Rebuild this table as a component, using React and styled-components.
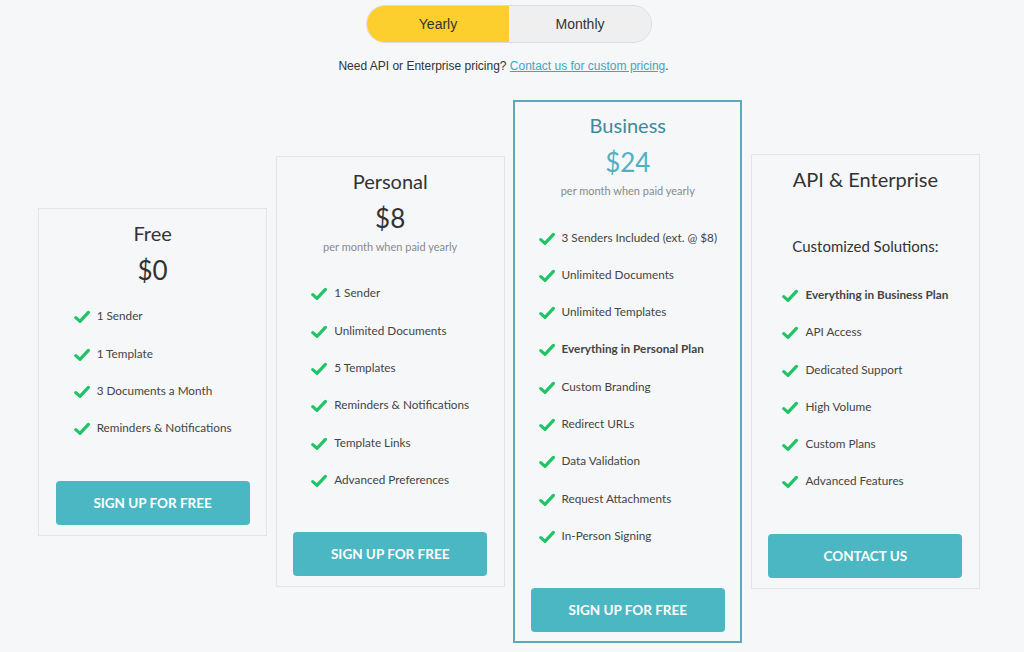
import React from "react";
import styled, { createGlobalStyle } from "styled-components";

const plans = [
  {
    name: "Free",
    price: "$0",
    features: ["1 Sender", "1 Template", "3 Documents a Month", "Reminders & Notifications"],
    cta: "Sign up for free",
  },
  {
    name: "Personal",
    price: "$8",
    note: "per month when paid yearly",
    features: [
      "1 Sender",
      "Unlimited Documents",
      "5 Templates",
      "Reminders & Notifications",
      "Template Links",
      "Advanced Preferences",
    ],
    cta: "Sign up for free",
  },
  {
    name: "Business",
    price: "$24",
    note: "per month when paid yearly",
    featured: true,
    features: [
      "3 Senders Included (ext. @ $8)",
      "Unlimited Documents",
      "Unlimited Templates",
      { text: "Everything in Personal Plan", bold: true },
      "Custom Branding",
      "Redirect URLs",
      "Data Validation",
      "Request Attachments",
      "In-Person Signing",
    ],
    cta: "Sign up for free",
  },
  {
    name: "API & Enterprise",
    tagline: "Customized Solutions:",
    features: [
      { text: "Everything in Business Plan", bold: true },
      "API Access",
      "Dedicated Support",
      "High Volume",
      "Custom Plans",
      "Advanced Features",
    ],
    cta: "Contact us",
  },
];

const Check = () => (
  <CheckIcon viewBox="0 0 16 14" aria-hidden="true">
    <path d="M1.8 7.6 L6 11.4 L14.4 2.4" fill="none" stroke="#1fc466" strokeWidth="3.2" strokeLinecap="round" strokeLinejoin="round" />
  </CheckIcon>
);

const App = () => (
  <>
    <GlobalStyle />
    <Page>
      <Toggle>
        <ToggleOption active>Yearly</ToggleOption>
        <ToggleOption>Monthly</ToggleOption>
      </Toggle>
      <Notice>
        Need API or Enterprise pricing? <a href="#contact">Contact us for custom pricing</a>.
      </Notice>

      <Plans>
        {plans.map((plan) => (
          <Card key={plan.name} featured={plan.featured}>
            <Title featured={plan.featured}>{plan.name}</Title>
            {plan.price && <Price featured={plan.featured}>{plan.price}</Price>}
            {plan.note && <Note>{plan.note}</Note>}
            {plan.tagline && <Tagline>{plan.tagline}</Tagline>}
            <Features>
              {plan.features.map((f) => {
                const item = typeof f === "string" ? { text: f } : f;
                return (
                  <Feature key={item.text} bold={item.bold}>
                    <Check />
                    <span>{item.text}</span>
                  </Feature>
                );
              })}
            </Features>
            <Button>{plan.cta}</Button>
          </Card>
        ))}
      </Plans>
    </Page>
  </>
);

export default App;

/* styles */
const GlobalStyle = createGlobalStyle`
  html, body {
    margin: 0;
    background: #f5f7f9;
  }
  body {
    font-family: Lato, "Liberation Sans", sans-serif;
    color: #333;
  }
`;

const Page = styled.div`
  width: 1018px;
  padding-top: 5px;
  display: flex;
  flex-direction: column;
  align-items: center;
`;

const Toggle = styled.div`
  display: flex;
  width: 286px;
  height: 38px;
  border-radius: 19px;
  overflow: hidden;
  border: 1px solid #dcdcdc;
  box-sizing: border-box;
`;

const ToggleOption = styled.div`
  flex: 1;
  display: flex;
  align-items: center;
  justify-content: center;
  font-family: "Liberation Sans", Arial, sans-serif;
  font-size: 14px;
  color: #333;
  background: ${(p) => (p.active ? "#fccf2f" : "#efefef")};
`;

const Notice = styled.p`
  margin: 16px 11px 0 0;
  font-family: "Liberation Sans", Arial, sans-serif;
  font-size: 12px;
  line-height: 14px;
  color: #333;

  a {
    color: #3ea8b8;
    text-decoration: underline;
  }
`;

const Plans = styled.div`
  display: flex;
  align-items: center;
  gap: 8.6px;
  margin-top: 27px;
`;

const Card = styled.div`
  width: 229px;
  box-sizing: border-box;
  display: flex;
  flex-direction: column;
  align-items: center;
  padding: ${(p) => (p.featured ? "11px 16px 9px" : "12px 17px 10px")};
  border: ${(p) => (p.featured ? "2px solid #58abb9" : "1px solid #e2e5e9")};
  background: #f5f7f9;
`;

const Title = styled.h2`
  margin: 0;
  font-size: 20px;
  line-height: 24px;
  font-weight: 400;
  color: ${(p) => (p.featured ? "#3c8b9b" : "#333")};
`;

const Price = styled.div`
  margin-top: 9px;
  font-size: 26px;
  line-height: 32px;
  color: ${(p) => (p.featured ? "#4fb1c1" : "#333")};
`;

const Note = styled.div`
  margin: 6px 0 9px;
  font-size: 11px;
  line-height: 14px;
  color: #8a8a8a;
`;

const Tagline = styled.div`
  margin: 45px 0 8px;
  font-size: 15px;
  line-height: 20px;
  color: #333;
`;

const Features = styled.ul`
  list-style: none;
  margin: 20px 0 0;
  padding: 0;
  align-self: center;
`;

const Feature = styled.li`
  display: flex;
  align-items: center;
  gap: 7px;
  height: 20px;
  margin-bottom: 17.3px;
  font-size: 11.75px;
  color: #444;
  font-weight: ${(p) => (p.bold ? 700 : 400)};
`;

const CheckIcon = styled.svg`
  width: 16px;
  height: 14px;
  flex: none;
  margin-top: 3px;
`;

const Button = styled.button`
  margin-top: 25.7px;
  width: 194px;
  height: 44px;
  border: none;
  border-radius: 4px;
  background: #4bb7c3;
  color: #fff;
  font-family: Lato, "Liberation Sans", sans-serif;
  font-size: 13.5px;
  font-weight: 700;
  text-transform: uppercase;
  cursor: pointer;
`;
